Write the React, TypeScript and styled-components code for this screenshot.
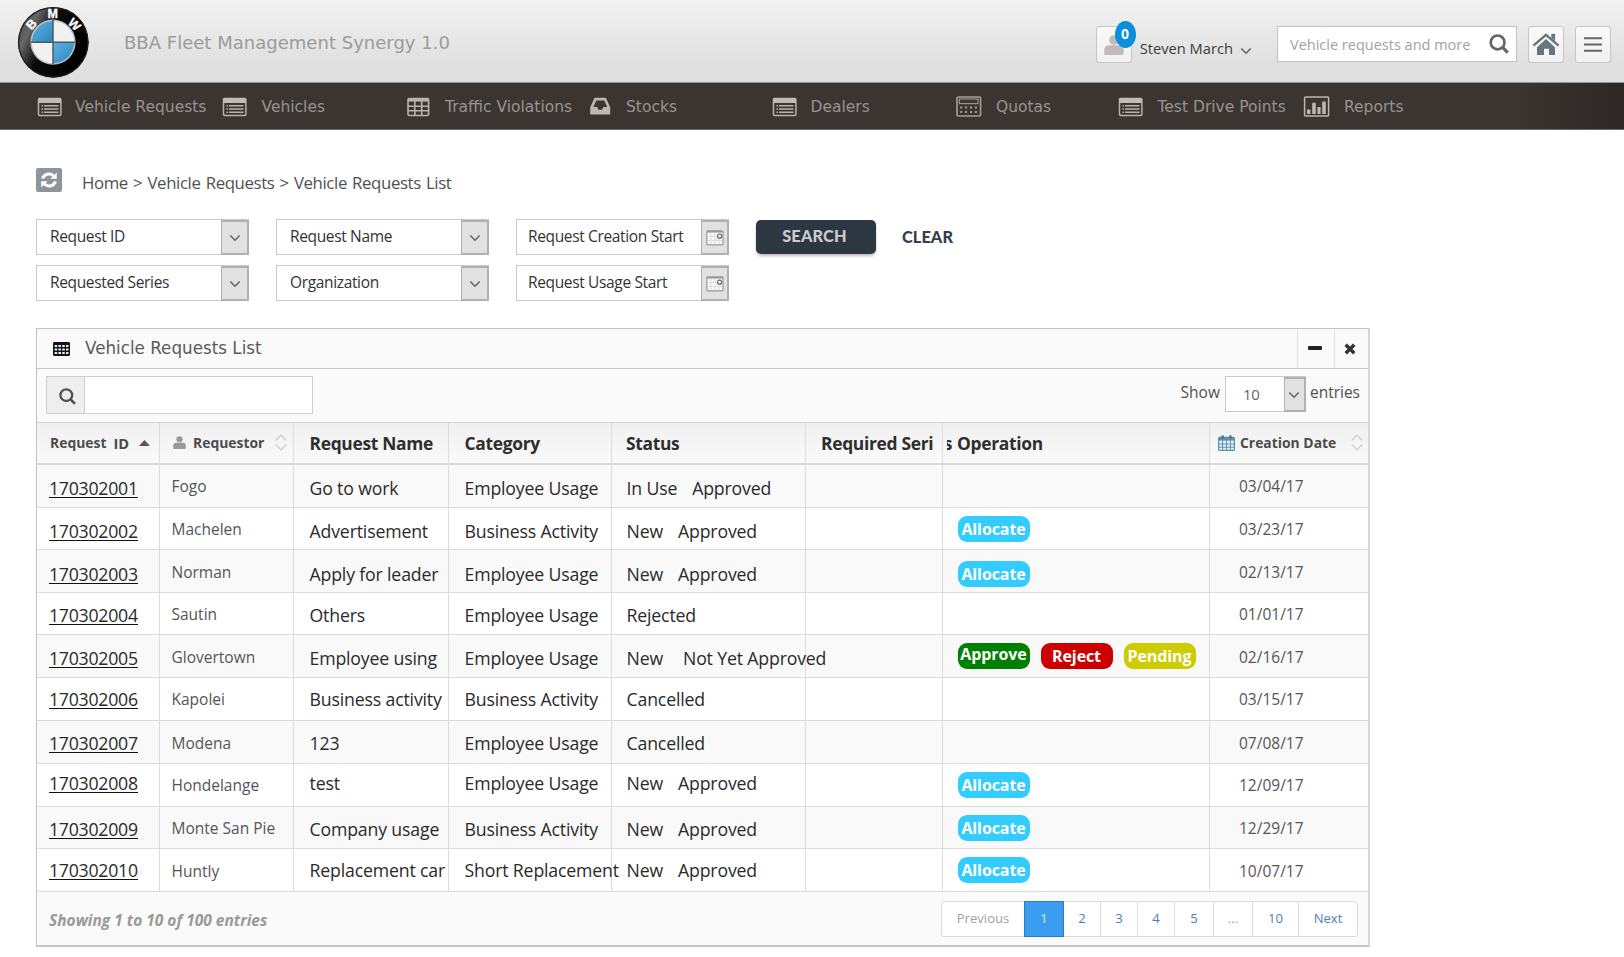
import React from "react";
import styled, { createGlobalStyle } from "styled-components";

const sans = `"Open Sans", "Noto Sans", sans-serif`;
const wide = `"DejaVu Sans", Verdana, sans-serif`;

const GlobalStyle = createGlobalStyle`
  * { box-sizing: border-box; }
  body { margin: 0; background: #fff; font-family: ${sans}; color: #333; }
  svg { display: block; flex: none; }
`;

const Page = styled.div`
  width: 1624px;
  height: 957px;
  overflow: hidden;
  background: #fff;
`;

/* ---------- header ---------- */

const Header = styled.header`
  display: flex;
  align-items: flex-start;
  height: 83px;
  padding: 6px 13px 0 17px;
  border-bottom: 1px solid #8d979e;
  background: linear-gradient(#f2f2f2, #dfdfdf 80%);
`;

const AppTitle = styled.h1`
  margin: 24px auto 0 35px;
  font: 400 18.05px/26px ${wide};
  color: #9b9b9b;
  white-space: nowrap;
`;

const SquareButton = styled.div<{ $left?: number }>`
  position: relative;
  display: flex;
  align-items: center;
  justify-content: center;
  width: 36px;
  height: 37px;
  margin: 20px 0 0 ${(p) => p.$left ?? 0}px;
  border: 1px solid #c6c6c6;
  border-radius: 3px;
  background: linear-gradient(#f9f9f9, #f1f1f1);
`;

const CountBadge = styled.span`
  position: absolute;
  left: 18px;
  top: -6px;
  width: 21px;
  height: 27px;
  border-radius: 50%;
  background: #0a8fdc;
  color: #fff;
  font: 700 14px/26px ${sans};
  text-align: center;
`;

const UserName = styled.span`
  margin: 30px 7px 0 8px;
  font-size: 14.7px;
  line-height: 24px;
  color: #3c3c3c;
  white-space: nowrap;
`;

const UserCaret = styled.div`
  margin: 41px 25px 0 0;
`;

const HeaderSearch = styled.div`
  display: flex;
  align-items: center;
  justify-content: space-between;
  width: 240px;
  height: 36px;
  margin-top: 20px;
  padding: 0 7px 0 12px;
  border: 1px solid #c2c2c2;
  background: #fff;
  font-size: 14.5px;
  color: #a2a2a2;
  white-space: nowrap;
`;

/* ---------- navigation ---------- */

const Nav = styled.nav`
  display: grid;
  grid-template-columns: 185px 184px 183px 183px 183px 163px 185px 180px;
  height: 47px;
  padding-left: 37px;
  border-bottom: 1px solid #6b6764;
  background: linear-gradient(90deg, #3b3532 0, #3b3532 1520px, #2c2724 1624px);
`;

const NavItem = styled.a<{ $gap: number }>`
  display: grid;
  grid-template-columns: ${(p) => p.$gap}px auto;
  justify-content: start;
  align-items: center;
  padding-top: 1px;
  font: 400 15.5px/24px ${wide};
  color: #989390;
  white-space: nowrap;
`;

const NavLabel = styled.span`
  padding-top: 1px;
`;

/* ---------- breadcrumb and filters ---------- */

const Crumbs = styled.div`
  display: flex;
  align-items: flex-start;
  gap: 20px;
  height: 51px;
  margin: 38px 0 0 36px;
`;

const RefreshButton = styled.div`
  display: flex;
  align-items: center;
  justify-content: center;
  width: 26px;
  height: 24px;
  border-radius: 2px;
  background: #8f939b;
`;

const CrumbText = styled.span`
  margin-top: 3px;
  font-size: 16.8px;
  line-height: 24px;
  letter-spacing: -0.38px;
  word-spacing: 1.2px;
  color: #505050;
`;

const Filters = styled.div`
  display: flex;
  height: 109px;
  padding-left: 36px;
`;

const FilterGrid = styled.div`
  display: grid;
  grid-template-columns: repeat(3, 213px);
  grid-auto-rows: 36px;
  column-gap: 27px;
  row-gap: 10px;
`;

const Field = styled.div<{ $pad?: number }>`
  display: flex;
  height: 36px;
  border: 1px solid #c9c9c9;
  background: #fff;
  font-size: 15.5px;
  letter-spacing: -0.35px;
  color: #333;
  span {
    flex: 1;
    padding-left: ${(p) => p.$pad ?? 13}px;
    line-height: 33px;
    white-space: nowrap;
  }
`;

const FieldButton = styled.div<{ $width?: number }>`
  display: flex;
  align-items: center;
  justify-content: center;
  width: ${(p) => p.$width ?? 28}px;
  height: 35px;
  margin-right: -1px;
  border: 2px solid #b0b0b0;
  border-left-width: 1px;
  background: #e1e1e1;
`;

const SearchButton = styled.button`
  width: 120px;
  height: 34px;
  margin: 1px 26px 0 27px;
  padding: 0 3px 2px 0;
  border: 0;
  border-radius: 5px;
  background: #2c3742;
  box-shadow: 0 2px 3px rgba(0, 0, 0, 0.25);
  color: #c9cbce;
  font: 900 16.3px/30px Lato, sans-serif;
  letter-spacing: 0.2px;
`;

const ClearButton = styled.button`
  height: 34px;
  margin-top: 1px;
  padding: 0;
  border: 0;
  background: none;
  color: #333f4e;
  font: 900 16.3px/34px Lato, sans-serif;
  letter-spacing: 0.1px;
`;

/* ---------- panel ---------- */

const Panel = styled.section`
  width: 1334px;
  height: 619px;
  margin-left: 36px;
  border: 1px solid #c3c3c3;
  border-right: 2px solid #d6d6d6;
  border-bottom: 2px solid #c6c6c6;
  background: #fafafa;
`;

const PanelHead = styled.div`
  display: flex;
  align-items: center;
  height: 40px;
  border-bottom: 1px solid #c6c6c6;
`;

const PanelTitle = styled.h2`
  flex: 1;
  margin: 0 0 2px 15px;
  font: 400 16.75px/24px ${wide};
  color: #5a5a5a;
`;

const PanelAction = styled.div<{ $width: number }>`
  display: flex;
  align-items: center;
  justify-content: center;
  width: ${(p) => p.$width}px;
  height: 39px;
  padding-right: 3px;
  border-left: 1px solid #e0e0e0;
`;

const Toolbar = styled.div`
  display: flex;
  align-items: flex-start;
  justify-content: space-between;
  height: 53px;
  padding: 7px 8px 0 9px;
`;

const TableSearch = styled.div`
  display: flex;
  width: 267px;
  height: 38px;
  border: 1px solid #cfcfcf;
  background: #fff;
`;

const SearchAddon = styled.div`
  display: flex;
  align-items: center;
  justify-content: center;
  width: 38px;
  padding: 2px 0 0 3px;
  border-right: 1px solid #cfcfcf;
  background: #eee;
`;

const PageLength = styled.div`
  display: flex;
  font-size: 15.5px;
  line-height: 33px;
  color: #505050;
`;

const LengthSelect = styled(Field)`
  width: 81px;
  margin: 0 4px 0 5px;
  font-size: 15px;
  letter-spacing: -0.2px;
  color: #666;
  span { line-height: 35px; }
`;

const columns = "123px 134px 155px 163px 194px 137px 267px 158px";

const HeadRow = styled.div`
  display: grid;
  grid-template-columns: ${columns};
  height: 43px;
  border-top: 1px solid #d4d4d4;
  border-bottom: 2px solid #dadada;
  background: linear-gradient(#f0f0f0, #fafafa);
`;

const HeadCell = styled.div<{ $pad: number; $small?: boolean }>`
  display: flex;
  align-items: center;
  padding: 0 0 1px ${(p) => p.$pad}px;
  border-right: 1px solid #dcdcdc;
  font-size: ${(p) => (p.$small ? 13.9 : 17.4)}px;
  font-weight: 700;
  letter-spacing: ${(p) => (p.$small ? 0 : -0.3)}px;
  color: ${(p) => (p.$small ? "#4c4c4c" : "#2e2e2e")};
  white-space: nowrap;
  &:last-child { border-right: 0; }
`;

const HeadGap = styled.i<{ $w: number }>`
  flex: none;
  width: ${(p) => p.$w}px;
`;

const IdLabel = styled.span`
  padding-top: 1px;
  font-size: 14.6px;
`;

const CutLetter = styled.span`
  display: flex;
  justify-content: flex-end;
  width: 5px;
  margin-right: 5px;
  overflow: hidden;
`;

const Row = styled.div<{ $height: number; $odd: boolean }>`
  display: grid;
  grid-template-columns: ${columns};
  height: ${(p) => p.$height}px;
  border-bottom: 1px solid #dcdcdc;
  background: ${(p) => (p.$odd ? "#f9f9f9" : "#fff")};
  &:last-of-type { border-bottom-color: #cfcfcf; }
`;

const Cell = styled.div<{ $pad: number; $top: number }>`
  padding: ${(p) => p.$top}px 0 0 ${(p) => p.$pad}px;
  border-right: 1px solid #dcdcdc;
  font-size: 17.7px;
  line-height: 24px;
  letter-spacing: -0.16px;
  color: #2a2a2a;
  white-space: nowrap;
  &:last-child { border-right: 0; }
`;

const SmallCell = styled(Cell)`
  font-size: 15.5px;
  letter-spacing: 0;
  color: #555;
`;

const IdLink = styled.a`
  display: block;
  width: 89px;
  height: 22px;
  border-bottom: 1px solid #111;
  letter-spacing: -0.24px;
`;

const Approval = styled.span<{ $gap: number }>`
  margin-left: ${(p) => p.$gap}px;
`;

const Actions = styled(Cell)`
  display: flex;
  align-items: flex-start;
  gap: 11px;
`;

const Badge = styled.span<{ $bg: string; $drop?: number }>`
  width: 72px;
  height: 26px;
  border-radius: 9px;
  background: ${(p) => p.$bg};
  color: #fff;
  font-weight: 700;
  font-size: 16px;
  line-height: ${(p) => 26 + (p.$drop ?? 0)}px;
  letter-spacing: -0.1px;
  text-align: center;
`;

const Footer = styled.div`
  display: flex;
  align-items: flex-start;
  justify-content: space-between;
  padding: 9px 10px 0 12px;
`;

const Summary = styled.span`
  margin-top: 7px;
  font: italic 700 15.5px/24px ${sans};
  color: #999;
`;

const Pager = styled.div`
  display: flex;
  height: 36px;
  border: 1px solid #dcdcdc;
  border-radius: 3px;
  background: #fff;
`;

const PageLink = styled.a<{ $width: number; $state?: "muted" | "active" }>`
  width: ${(p) => p.$width}px;
  height: 34px;
  border-right: 1px solid #dedede;
  font-size: 13.1px;
  line-height: 33px;
  text-align: center;
  color: ${(p) => (p.$state === "muted" ? "#a0a0a0" : "#4a80b8")};
  &:last-child { border-right: 0; }
  ${(p) =>
    p.$state === "active" &&
    `height: 36px; margin: -1px 0 0 -1px; border: 1px solid #2d7cc0; background: #3a9df0; color: #d8ecff;`}
`;

/* ---------- icons ---------- */

const Logo = () => (
  <svg width="72" height="72" viewBox="0 0 72 72">
    <defs>
      <linearGradient id="ring" x1="0" y1="0" x2="1" y2="0.5">
        <stop offset="0" stopColor="#3a3a3a" />
        <stop offset="0.25" stopColor="#666" />
        <stop offset="0.5" stopColor="#0b0b0b" />
        <stop offset="1" stopColor="#000" />
      </linearGradient>
      <linearGradient id="blue" x1="0" y1="0" x2="1" y2="1">
        <stop offset="0" stopColor="#5fb2e2" />
        <stop offset="1" stopColor="#2a86bd" />
      </linearGradient>
    </defs>
    <circle cx="36.3" cy="36.3" r="35.4" fill="#000" />
    <circle cx="36.3" cy="36.3" r="34.6" fill="url(#ring)" stroke="#222" />
    <circle cx="36" cy="36.2" r="22.6" fill="#b9bec2" />
    <circle cx="36" cy="36.2" r="21.2" fill="#f1f1f1" />
    <path d="M36 36.2V15A21.2 21.2 0 0 0 14.8 36.2Z" fill="url(#blue)" />
    <path d="M36 36.2V57.4A21.2 21.2 0 0 0 57.2 36.2Z" fill="url(#blue)" />
    <path d="M36 14v44.6M14 36.2h44" stroke="#4c5a64" strokeWidth="1.5" />
    <g
      fill="#fff"
      stroke="#fff"
      strokeWidth="0.3"
      fontFamily="Liberation Sans, sans-serif"
      fontWeight="700"
      fontSize="12.5"
      textAnchor="middle"
    >
      <text transform="translate(17.6 21.2) rotate(-48)">B</text>
      <text x="35.8" y="11.6">M</text>
      <text transform="translate(54.4 21.4) rotate(45)">W</text>
    </g>
  </svg>
);

const ListIcon = () => (
  <svg width="25" height="20" viewBox="0 0 25 20">
    <rect x="1.5" y="1.5" width="22.4" height="17" rx="1.2" fill="none" stroke="#b9b3af" strokeWidth="1.5" />
    <path d="M1.5 1h22.4v5H1.5z" fill="#c2bcb8" />
    <path d="M4.5 8.8h1.5M4.5 12h1.5M4.5 15.2h1.5M7 8.8h14.5M7 12h14.5M7 15.2h14.5" stroke="#b9b3af" strokeWidth="1.4" />
  </svg>
);

const GridIcon = () => (
  <svg width="24" height="20" viewBox="0 0 24 20">
    <rect x="2" y="1.5" width="20.6" height="17" rx="1.2" fill="none" stroke="#b9b3af" strokeWidth="1.6" />
    <path d="M2 1h20.6v3.6H2z" fill="#b9b3af" />
    <path d="M2 9.2h20.6M2 13.8h20.6M8.8 3v15.5M15.7 3v15.5" stroke="#b9b3af" strokeWidth="1.6" />
  </svg>
);

const TableIcon = () => (
  <svg width="17" height="14" viewBox="0 0 17 14">
    <rect width="17" height="14" rx="1.4" fill="#101318" />
    <path
      d="M1.6 3h2.6v2.1H1.6zM5.4 3H8v2.1H5.4zM9.2 3h2.6v2.1H9.2zM13 3h2.5v2.1H13zM1.6 6.4h2.6v2.1H1.6zM5.4 6.4H8v2.1H5.4zM9.2 6.4h2.6v2.1H9.2zM13 6.4h2.5v2.1H13zM1.6 9.9h2.6V12H1.6zM5.4 9.9H8V12H5.4zM9.2 9.9h2.6V12H9.2zM13 9.9h2.5V12H13z"
      fill="#e8ecf2"
    />
  </svg>
);

const InboxIcon = () => (
  <svg width="22" height="19" viewBox="0 0 22 19">
    <path
      fillRule="evenodd"
      fill="#bdb7b3"
      d="M5.6 .8h11.2l4.4 9.4v7.3H1.2v-7.3zM7.3 3.4 4.4 10h3.9l1.1 2.7h3.8L14.3 10h3.9l-2.9-6.6z"
    />
  </svg>
);

const CalculatorIcon = () => (
  <svg width="27" height="21" viewBox="0 0 27 21">
    <rect x="2" y="1" width="23.6" height="19" rx="1.3" fill="none" stroke="#a59f9b" strokeWidth="1.6" />
    <rect x="4.4" y="3" width="18.6" height="4.6" fill="none" stroke="#a08f82" strokeWidth="1.2" />
    <path d="M5.2 11.5h17M5.2 16h17" stroke="#a59f9b" strokeWidth="2" strokeDasharray="2 2.9" />
  </svg>
);

const ChartIcon = () => (
  <svg width="27" height="21" viewBox="0 0 27 21">
    <rect x="1.6" y="1" width="24" height="19" rx="1" fill="none" stroke="#bdb7b3" strokeWidth="1.5" />
    <path d="M4 18v-4.6h3.5V18zM9.2 18V6.8h3.6V18zM14.4 18v-7h3.2v7zM19.2 18V5.5h3.6V18z" fill="#bdb7b3" />
  </svg>
);

const PersonIcon = ({ width, height, color }: { width: number; height: number; color: string }) => (
  <svg width={width} height={height} viewBox="0 0 20 20" preserveAspectRatio="none">
    <circle cx="10" cy="5" r="4.8" fill={color} />
    <path d="M.3 20v-5.2C.3 12 2.4 10.2 5 10.2h10c2.6 0 4.7 1.8 4.7 4.6V18c0 1.2-.8 2-2 2z" fill={color} />
  </svg>
);

const SearchIcon = ({ size, color }: { size: number; color: string }) => (
  <svg width={size} height={size} viewBox="0 0 20 20">
    <circle cx="8.6" cy="8.4" r="6.9" fill="none" stroke={color} strokeWidth="2.7" />
    <path d="M13.6 13.4l5.2 5.3" stroke={color} strokeWidth="3.2" />
  </svg>
);

const HomeIcon = () => (
  <svg width="28" height="24" viewBox="0 0 28 24">
    <path d="M5 14.2 14 6l9 8.2V22h-6v-6.2h-5V22H5z" fill="#68757d" />
    <path d="M1.4 12.6 14 1.8l12.6 10.8" fill="none" stroke="#68757d" strokeWidth="2.4" />
    <path d="M19.3 .8h3.8v7.2l-3.8-3.2z" fill="#68757d" />
  </svg>
);

const MenuIcon = () => (
  <svg width="18" height="16" viewBox="0 0 18 16">
    <path d="M0 1.2h18M0 7.5h18M0 13.8h18" stroke="#666" strokeWidth="2" />
  </svg>
);

const Caret = ({ color = "#666" }) => (
  <svg width="12" height="8" viewBox="0 0 12 8">
    <path d="M1.3 1.5 6 6.2l4.7-4.7" fill="none" stroke={color} strokeWidth="1.6" />
  </svg>
);

const DateIcon = () => (
  <svg width="18" height="16" viewBox="0 0 18 16">
    <rect x=".8" y=".8" width="16.2" height="14" rx="1" fill="#f7f7f7" stroke="#999" strokeWidth="1.2" />
    <path d="M1 1.7h16" stroke="#999" strokeWidth="1.8" />
    <path d="M5 3v11M9 3v11M13 9v5M2 6.5h9M2 10.5h14" stroke="#ddd" />
    <circle cx="13.6" cy="6.2" r="2" fill="#fff" stroke="#666" strokeWidth="1.2" />
  </svg>
);

const RefreshIcon = () => (
  <svg width="18" height="18" viewBox="0 0 18 18" fill="none" stroke="#fff" strokeWidth="3">
    <path d="M2.6 7.6A6.4 5.7 0 0 1 13.6 5M15.4 10.4A6.4 5.7 0 0 1 4.4 13" />
    <path d="M16.8 1.4v6.4h-6.4zM1.2 16.6v-6.4h6.4z" fill="#fff" stroke="none" />
  </svg>
);

const MinusIcon = () => (
  <svg width="14" height="6" viewBox="0 0 14 6">
    <rect width="14" height="4" rx="1" fill="#222" />
  </svg>
);

const CloseIcon = () => (
  <svg width="12" height="12" viewBox="0 0 12 12">
    <path d="M1.7 1.7l8.6 8.6M10.3 1.7l-8.6 8.6" stroke="#333" strokeWidth="3.4" />
  </svg>
);

const SortIcon = () => (
  <svg width="12" height="17" viewBox="0 0 12 17" fill="none" stroke="#ccc" strokeWidth="1.2">
    <path d="M.8 6.5 6 1.2l5.2 5.3M.8 10.5 6 15.8l5.2-5.3" />
  </svg>
);

const SortedIcon = () => (
  <svg width="11" height="6" viewBox="0 0 11 6">
    <path d="M0 6 5.5 0 11 6z" fill="#555" />
  </svg>
);

const CalendarIcon = () => (
  <svg width="17" height="16" viewBox="0 0 17 16">
    <rect x=".6" y="2.4" width="15.8" height="13" rx="1" fill="#e9f3f7" stroke="#5b92a8" strokeWidth="1.2" />
    <path d="M.6 2.6h15.8v3H.6z" fill="#5b92a8" />
    <path d="M1 9h15M1 12.2h15M4.6 5v10M8.5 5v10M12.4 5v10" stroke="#5b92a8" strokeWidth="1" />
    <path d="M4.6.4v3.4M12.4.4v3.4" stroke="#477e95" strokeWidth="2.6" />
  </svg>
);

/* ---------- data ---------- */

const navItems = [
  { label: "Vehicle Requests", icon: <ListIcon />, gap: 38 },
  { label: "Vehicles", icon: <ListIcon />, gap: 39.5 },
  { label: "Traffic Violations", icon: <GridIcon />, gap: 39 },
  { label: "Stocks", icon: <InboxIcon />, gap: 37 },
  { label: "Dealers", icon: <ListIcon />, gap: 38.5 },
  { label: "Quotas", icon: <CalculatorIcon />, gap: 41 },
  { label: "Test Drive Points", icon: <ListIcon />, gap: 39.5 },
  { label: "Reports", icon: <ChartIcon />, gap: 41 },
];

const filters: { label: string; date?: boolean }[] = [
  { label: "Request ID" },
  { label: "Request Name" },
  { label: "Request Creation Start", date: true },
  { label: "Requested Series" },
  { label: "Organization" },
  { label: "Request Usage Start", date: true },
];

interface Request {
  id: string;
  who: string;
  name: string;
  category: string;
  status: string;
  approval?: string;
  gap?: number;
  ops?: string[];
  date: string;
  height: number;
  top: number;
  opsTop?: number;
  smallTop?: number;
}

const E = "Employee Usage";
const B = "Business Activity";

const requests: Request[] = [
  { id: "170302001", who: "Fogo", name: "Go to work", category: E, status: "In Use", approval: "Approved", date: "03/04/17", height: 43, top: 11 },
  { id: "170302002", who: "Machelen", name: "Advertisement", category: B, status: "New", approval: "Approved", ops: ["Allocate"], date: "03/23/17", height: 42, top: 11 },
  { id: "170302003", who: "Norman", name: "Apply for leader", category: E, status: "New", approval: "Approved", ops: ["Allocate"], date: "02/13/17", height: 43, top: 12, opsTop: 11, smallTop: 10 },
  { id: "170302004", who: "Sautin", name: "Others", category: E, status: "Rejected", date: "01/01/17", height: 42, top: 10 },
  { id: "170302005", who: "Glovertown", name: "Employee using", category: E, status: "New", approval: "Not Yet Approved", gap: 20, ops: ["Approve", "Reject", "Pending"], date: "02/16/17", height: 43, top: 11, smallTop: 10 },
  { id: "170302006", who: "Kapolei", name: "Business activity", category: B, status: "Cancelled", date: "03/15/17", height: 43, top: 9 },
  { id: "170302007", who: "Modena", name: "123", category: E, status: "Cancelled", date: "07/08/17", height: 43, top: 10, smallTop: 10 },
  { id: "170302008", who: "Hondelange", name: "test", category: E, status: "New", approval: "Approved", ops: ["Allocate"], date: "12/09/17", height: 43, top: 7 },
  { id: "170302009", who: "Monte San Pie", name: "Company usage", category: B, status: "New", approval: "Approved", ops: ["Allocate"], date: "12/29/17", height: 42, top: 10 },
  { id: "170302010", who: "Huntly", name: "Replacement car", category: "Short Replacement", status: "New", approval: "Approved", ops: ["Allocate"], date: "10/07/17", height: 43, top: 9, smallTop: 10 },
];

const opColors: Record<string, string> = {
  Allocate: "#33ccff",
  Approve: "#008000",
  Reject: "#cc0000",
  Pending: "#cccc00",
};

const pages: { label: string; width: number; state?: "muted" | "active" }[] = [
  { label: "Previous", width: 83, state: "muted" },
  { label: "1", width: 40, state: "active" },
  { label: "2", width: 37 },
  { label: "3", width: 37 },
  { label: "4", width: 37 },
  { label: "5", width: 39 },
  { label: "...", width: 39, state: "muted" },
  { label: "10", width: 46 },
  { label: "Next", width: 58 },
];

export default function App() {
  return (
    <Page>
      <GlobalStyle />
      <Header>
        <Logo />
        <AppTitle>BBA Fleet Management Synergy 1.0</AppTitle>
        <SquareButton>
          <PersonIcon width={20} height={20} color="#c3b9b6" />
          <CountBadge>0</CountBadge>
        </SquareButton>
        <UserName>Steven March</UserName>
        <UserCaret>
          <Caret />
        </UserCaret>
        <HeaderSearch>
          Vehicle requests and more
          <SearchIcon size={20} color="#666" />
        </HeaderSearch>
        <SquareButton $left={11}>
          <HomeIcon />
        </SquareButton>
        <SquareButton $left={11}>
          <MenuIcon />
        </SquareButton>
      </Header>

      <Nav>
        {navItems.map((item) => (
          <NavItem key={item.label} $gap={item.gap}>
            {item.icon}
            <NavLabel>{item.label}</NavLabel>
          </NavItem>
        ))}
      </Nav>

      <Crumbs>
        <RefreshButton>
          <RefreshIcon />
        </RefreshButton>
        <CrumbText>Home &gt; Vehicle Requests &gt; Vehicle Requests List</CrumbText>
      </Crumbs>

      <Filters>
        <FilterGrid>
          {filters.map((f) => (
            <Field key={f.label} $pad={f.date ? 11 : 13}>
              <span>{f.label}</span>
              <FieldButton>{f.date ? <DateIcon /> : <Caret />}</FieldButton>
            </Field>
          ))}
        </FilterGrid>
        <SearchButton>SEARCH</SearchButton>
        <ClearButton>CLEAR</ClearButton>
      </Filters>

      <Panel>
        <PanelHead>
          <HeadGap $w={16} />
          <TableIcon />
          <PanelTitle>Vehicle Requests List</PanelTitle>
          <PanelAction $width={37}>
            <MinusIcon />
          </PanelAction>
          <PanelAction $width={34}>
            <CloseIcon />
          </PanelAction>
        </PanelHead>

        <Toolbar>
          <TableSearch>
            <SearchAddon>
              <SearchIcon size={17} color="#505050" />
            </SearchAddon>
          </TableSearch>
          <PageLength>
            Show
            <LengthSelect $pad={17}>
              <span>10</span>
              <FieldButton $width={22}>
                <Caret />
              </FieldButton>
            </LengthSelect>
            entries
          </PageLength>
        </Toolbar>

        <HeadRow>
          <HeadCell $pad={13} $small>
            Request
            <HeadGap $w={7} />
            <IdLabel>ID</IdLabel>
            <HeadGap $w={10} />
            <SortedIcon />
          </HeadCell>
          <HeadCell $pad={13} $small>
            <PersonIcon width={13} height={13} color="#999" />
            <HeadGap $w={7} />
            Requestor
            <HeadGap $w={11} />
            <SortIcon />
          </HeadCell>
          <HeadCell $pad={15.5}>Request Name</HeadCell>
          <HeadCell $pad={15.5}>Category</HeadCell>
          <HeadCell $pad={14}>Status</HeadCell>
          <HeadCell $pad={15}>Required Seri</HeadCell>
          <HeadCell $pad={4}>
            <CutLetter>s</CutLetter>
            Operation
          </HeadCell>
          <HeadCell $pad={8} $small>
            <CalendarIcon />
            <HeadGap $w={5} />
            Creation Date
            <HeadGap $w={15} />
            <SortIcon />
          </HeadCell>
        </HeadRow>

        {requests.map((r, i) => (
          <Row key={r.id} $height={r.height} $odd={i % 2 === 0}>
            <Cell $pad={12} $top={r.top}>
              <IdLink>{r.id}</IdLink>
            </Cell>
            <SmallCell $pad={11.5} $top={r.smallTop ?? 9}>{r.who}</SmallCell>
            <Cell $pad={15.5} $top={r.top}>{r.name}</Cell>
            <Cell $pad={15.5} $top={r.top}>{r.category}</Cell>
            <Cell $pad={14.5} $top={r.top}>
              {r.status}
              {r.approval && <Approval $gap={r.gap ?? 15}>{r.approval}</Approval>}
            </Cell>
            <Cell $pad={0} $top={0} />
            <Actions $pad={14.5} $top={r.opsTop ?? 8}>
              {r.ops?.map((op) => (
                <Badge key={op} $bg={opColors[op]} $drop={op === "Approve" ? -3 : 0}>
                  {op}
                </Badge>
              ))}
            </Actions>
            <SmallCell $pad={29} $top={r.smallTop ?? 9}>{r.date}</SmallCell>
          </Row>
        ))}

        <Footer>
          <Summary>Showing 1 to 10 of 100 entries</Summary>
          <Pager>
            {pages.map((p) => (
              <PageLink key={p.label} $width={p.width} $state={p.state}>
                {p.label}
              </PageLink>
            ))}
          </Pager>
        </Footer>
      </Panel>
    </Page>
  );
}
